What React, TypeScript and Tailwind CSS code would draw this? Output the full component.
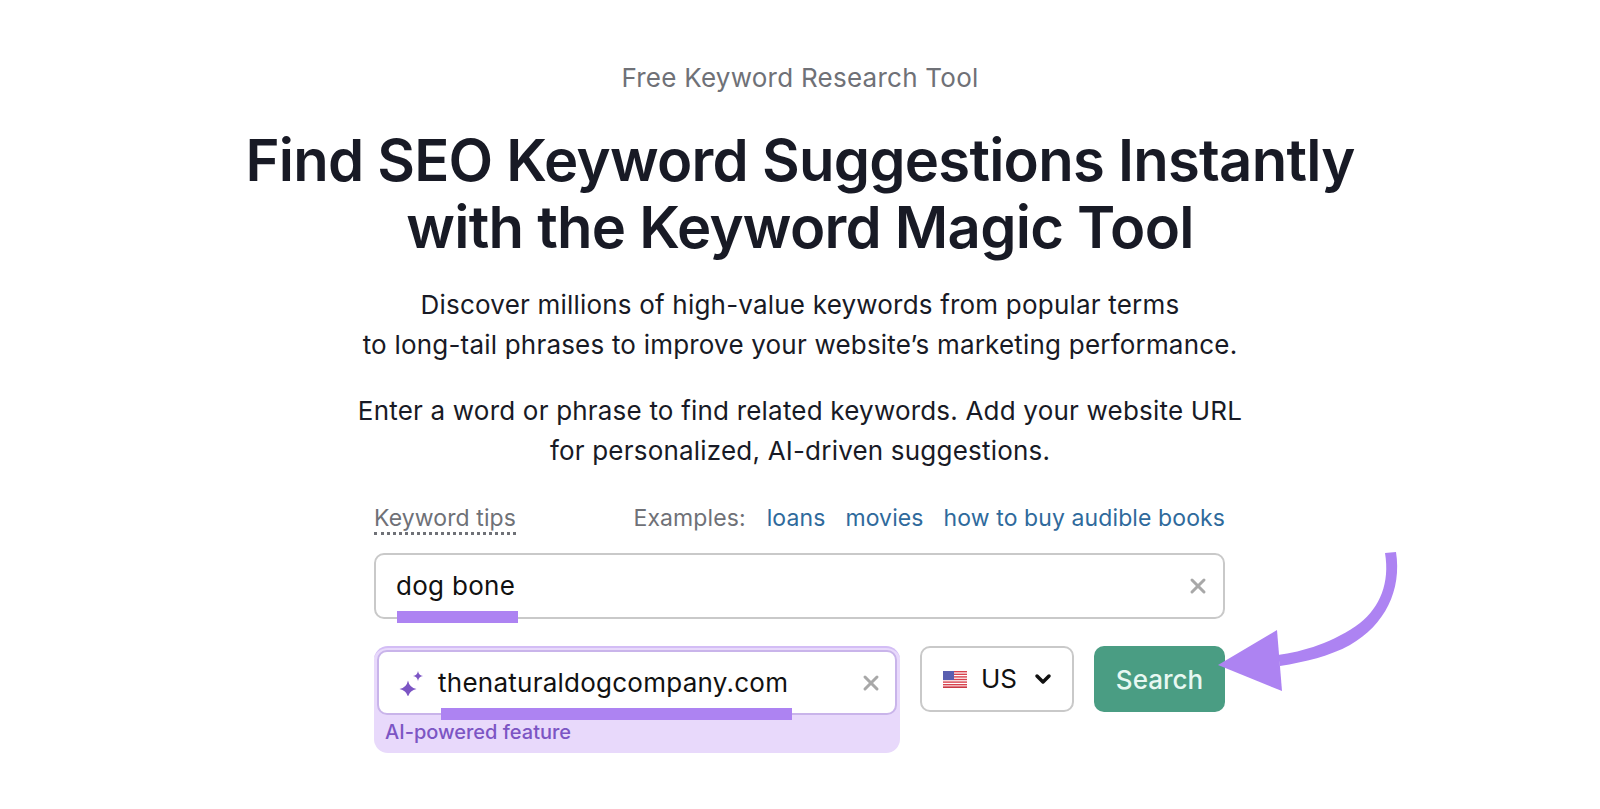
import React from "react";
import { X, ChevronDown } from "lucide-react";

const UsFlag = () => (
  <svg width="24" height="17" viewBox="0 0 24 17" className="shrink-0">
    <rect width="24" height="17" fill="#fff" />
    {[0, 2.6, 5.2, 7.8, 10.4, 13, 15.4].map((y) => (
      <rect key={y} x="0" y={y} width="24" height="1.4" fill="#d8434e" />
    ))}
    <rect width="11" height="9" fill="#5a5fb0" />
    <rect y="15.8" width="24" height="1.2" fill="#c93a45" />
  </svg>
);

const Sparkle = () => (
  <svg width="26" height="26" viewBox="0 0 26 26" fill="#7c55c4" className="shrink-0">
    <path d="M9 10.5 Q10.4 17.6 17.5 19 Q10.4 20.4 9 27 Q7.6 20.4 0.5 19 Q7.6 17.6 9 10.5 Z" />
    <path d="M19 4 Q19.7 8.3 24 9 Q19.7 9.7 19 14 Q18.3 9.7 14 9 Q18.3 8.3 19 4 Z" transform="translate(0 -3)" />
  </svg>
);

const Arrow = () => (
  <svg
    width="200"
    height="150"
    viewBox="0 0 200 150"
    className="absolute left-[1210px] top-[545px]"
    fill="#ad83f2"
  >
    <path d="M175 8 L186 7 C192 45 175 80 140 100 C120 111 95 117 70 121 L68 110 C92 107 125 97 150 78 C170 62 180 38 175 8 Z" />
    <path d="M8 120 L67 85 L72 146 Z" />
  </svg>
);

export default function App() {
  return (
    <div className="relative h-[809px] w-[1600px] overflow-hidden bg-white font-['Inter',sans-serif] text-[#181a25]">
      <div className="flex flex-col items-center pt-[60px]">
        <p className="text-[26px] leading-9 tracking-[0.25px] text-[#6f7177]">Free Keyword Research Tool</p>
        <h1 className="mt-[31px] text-center text-[58px] font-semibold leading-[67px] tracking-[-0.74px]">
          Find SEO Keyword Suggestions Instantly
          <br />
          with the Keyword Magic Tool
        </h1>
        <p className="mt-[24px] text-center text-[26px] leading-10 tracking-[0.2px]">
          Discover millions of high-value keywords from popular terms
          <br />
          to long-tail phrases to improve your website’s marketing performance.
        </p>
        <p className="mt-[26px] text-center text-[26px] leading-10 tracking-[0.2px]">
          Enter a word or phrase to find related keywords. Add your website URL
          <br />
          for personalized, AI-driven suggestions.
        </p>

        <div className="mr-[1px] mt-[31px] flex w-[851px] flex-col">
          <div className="flex items-start justify-between text-[23px] leading-8 tracking-[0.1px]">
            <span className="mt-[2px] border-b-[3px] border-dotted border-[#6f7177] leading-7 text-[#6f7177]">Keyword tips</span>
            <div className="flex gap-5">
              <span className="mr-[1px] text-[#6f7177]">Examples:</span>
              <span className="text-[#2f6a9c]">loans</span>
              <span className="text-[#2f6a9c]">movies</span>
              <span className="text-[#2f6a9c]">how to buy audible books</span>
            </div>
          </div>

          <div className="relative mt-[18px] flex h-[66px] items-center justify-between rounded-[10px] border-2 border-[#c9c9c9] pl-[20px] pr-[13px]">
            <span className="text-[26px] leading-8 tracking-[0.3px] text-[#111]">dog bone</span>
            <X size={24} strokeWidth={3} className="text-[#a8a8a8]" />
            <div className="absolute left-[21px] top-[56px] h-3 w-[121px] bg-[#ad83f2]" />
          </div>

          <div className="mt-[27px] flex items-start gap-5">
            <div className="relative flex h-[107px] w-[526px] flex-col rounded-[14px] border-t-2 border-[#d3bdf5] bg-[#e8d9fb] px-[3px]">
              <div className="mt-[2px] flex h-[65px] items-center justify-between rounded-[10px] border-2 border-[#c9b4ea] bg-white pl-[20px] pr-[12px]">
                <div className="flex items-center gap-[13px]">
                  <Sparkle />
                  <span className="mt-[1px] text-[26px] leading-8 tracking-[0.25px] text-[#111]">thenaturaldogcompany.com</span>
                </div>
                <X size={24} strokeWidth={3} className="text-[#a8a8a8]" />
              </div>
              <span className="ml-[8px] mt-[3px] text-[20px] font-medium leading-7 text-[#7c55c4]">AI-powered feature</span>
              <div className="absolute left-[67px] top-[60px] h-3 w-[351px] bg-[#ad83f2]" />
            </div>

            <div className="flex h-[66px] w-[154px] items-center gap-[14px] rounded-[10px] border-2 border-[#c9c9c9] pl-[21px]">
              <UsFlag />
              <span className="text-[26px] leading-8 text-[#111]">US</span>
              <ChevronDown size={24} strokeWidth={3.5} className="text-[#111]" />
            </div>

            <div className="flex h-[66px] w-[131px] items-center justify-center rounded-[10px] bg-[#4a9d83] text-[26px] font-medium text-[#e8f8f2]">
              Search
            </div>
          </div>
        </div>
      </div>
      <Arrow />
    </div>
  );
}
